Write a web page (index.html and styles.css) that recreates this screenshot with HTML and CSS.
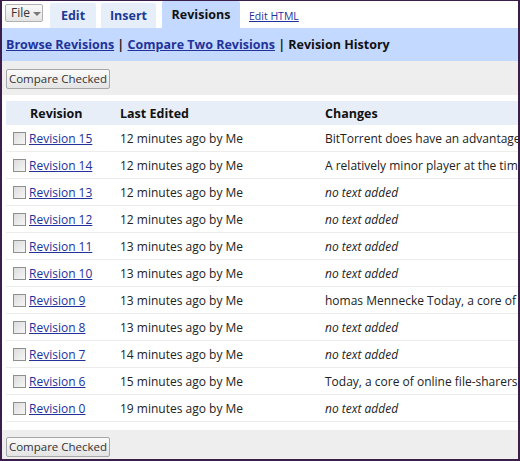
FILE: index.html
```html
<!DOCTYPE html>
<html>
<head>
<meta charset="utf-8">
<link rel="stylesheet" href="styles.css">
</head>
<body>
<div class="frame">
  <div class="topbar">
    <button class="file-btn">File <span class="caret"></span></button>
    <div class="tab tab-edit">Edit</div>
    <div class="tab tab-insert">Insert</div>
    <div class="tab tab-rev active">Revisions</div>
    <a class="edit-html" href="#">Edit HTML</a>
  </div>
  <div class="crumbs">
    <a href="#">Browse Revisions</a> | <a href="#">Compare Two Revisions</a> | <span class="current">Revision History</span>
  </div>
  <div class="toolbar">
    <button class="btn">Compare Checked</button>
  </div>
  <div class="table">
    <div class="row head">
      <div class="c1">Revision</div>
      <div class="c2">Last Edited</div>
      <div class="c3">Changes</div>
    </div>
    <div class="row"><div class="c1"><span class="cb"></span><a href="#">Revision 15</a></div><div class="c2">12 minutes ago by Me</div><div class="c3">BitTorrent does have an advantage w</div></div>
    <div class="row"><div class="c1"><span class="cb"></span><a href="#">Revision 14</a></div><div class="c2">12 minutes ago by Me</div><div class="c3">A relatively minor player at the time</div></div>
    <div class="row"><div class="c1"><span class="cb"></span><a href="#">Revision 13</a></div><div class="c2">12 minutes ago by Me</div><div class="c3"><em>no text added</em></div></div>
    <div class="row"><div class="c1"><span class="cb"></span><a href="#">Revision 12</a></div><div class="c2">12 minutes ago by Me</div><div class="c3"><em>no text added</em></div></div>
    <div class="row"><div class="c1"><span class="cb"></span><a href="#">Revision 11</a></div><div class="c2">13 minutes ago by Me</div><div class="c3"><em>no text added</em></div></div>
    <div class="row"><div class="c1"><span class="cb"></span><a href="#">Revision 10</a></div><div class="c2">13 minutes ago by Me</div><div class="c3"><em>no text added</em></div></div>
    <div class="row"><div class="c1"><span class="cb"></span><a href="#">Revision 9</a></div><div class="c2">13 minutes ago by Me</div><div class="c3">homas Mennecke Today, a core of c</div></div>
    <div class="row"><div class="c1"><span class="cb"></span><a href="#">Revision 8</a></div><div class="c2">13 minutes ago by Me</div><div class="c3"><em>no text added</em></div></div>
    <div class="row"><div class="c1"><span class="cb"></span><a href="#">Revision 7</a></div><div class="c2">14 minutes ago by Me</div><div class="c3"><em>no text added</em></div></div>
    <div class="row"><div class="c1"><span class="cb"></span><a href="#">Revision 6</a></div><div class="c2">15 minutes ago by Me</div><div class="c3">Today, a core of online file-sharers is</div></div>
    <div class="row"><div class="c1"><span class="cb"></span><a href="#">Revision 0</a></div><div class="c2">19 minutes ago by Me</div><div class="c3"><em>no text added</em></div></div>
  </div>
  <div class="toolbar bottom">
    <button class="btn">Compare Checked</button>
  </div>
</div>
</body>
</html>
```

FILE: styles.css
```css
html, body {
  margin: 0;
  padding: 0;
}
body {
  font-family: "Open Sans", "Noto Sans", sans-serif;
  font-size: 12px;
  color: #222;
  background: #fff;
}
.frame {
  width: 520px;
  height: 461px;
  box-sizing: border-box;
  border-style: solid;
  border-color: #3a1d48;
  border-width: 1px 2px 2px 2px;
  overflow: hidden;
  display: flex;
  flex-direction: column;
  background: #fff;
}
.topbar {
  height: 27px;
  flex: none;
  display: flex;
  align-items: flex-end;
  background: #fff;
}
.file-btn {
  align-self: flex-start;
  margin: 3px 0 0 3px;
  height: 18px;
  width: 38px;
  box-sizing: border-box;
  padding: 0 0 0 5px;
  border: 1px solid #b0b0b0;
  border-radius: 2px;
  background: linear-gradient(#fafafa, #e4e4e4);
  font-family: "Open Sans", sans-serif;
  font-size: 12px;
  color: #333;
  display: flex;
  align-items: center;
  gap: 3px;
  line-height: 1;
}
.caret {
  width: 0;
  height: 0;
  border-left: 4px solid transparent;
  border-right: 4px solid transparent;
  border-top: 4px solid #777;
  margin-top: 1px;
}
.tab {
  height: 25px;
  box-sizing: border-box;
  background: #e6eefa;
  color: #1d3a94;
  font-weight: bold;
  font-size: 12.5px;
  display: flex;
  align-items: center;
  justify-content: center;
  border-radius: 2px 2px 0 0;
}
.tab-edit { width: 46px; margin-left: 7px; }
.tab-insert { width: 55px; margin-left: 5px; }
.tab-rev { width: 78px; margin-left: 6px; }
.tab.active {
  height: 27px;
  background: #c3d9ff;
  color: #111;
}
.edit-html {
  align-self: center;
  margin: 3px 0 0 9px;
  font-size: 10.5px;
  color: #20309e;
}
.crumbs {
  height: 33px;
  flex: none;
  box-sizing: border-box;
  background: #c3d9ff;
  padding: 0 4px;
  line-height: 33px;
  font-weight: bold;
  font-size: 12.5px;
  color: #222;
  white-space: nowrap;
}
.crumbs a { color: #22329a; }
.crumbs .current { color: #111; }
.toolbar {
  height: 34px;
  flex: none;
  background: #eeeeee;
  display: flex;
  align-items: center;
  padding-left: 4px;
  padding-top: 1px;
  box-sizing: border-box;
}
.btn {
  height: 20px;
  width: 104px;
  box-sizing: border-box;
  border: 1px solid #a7a7a7;
  border-radius: 2px;
  background: linear-gradient(#fbfbfb, #e3e3e3);
  font-family: "Open Sans", sans-serif;
  font-size: 11.5px;
  color: #333;
  padding: 0;
  line-height: 1;
  white-space: nowrap;
}
.table {
  margin: 6px 0 8px 4px;
  flex: none;
}
.row {
  display: grid;
  grid-template-columns: 108px 205px 600px;
  height: 27px;
  box-sizing: border-box;
  border-bottom: 1px solid #ececec;
  align-items: center;
  white-space: nowrap;
}
.row.head {
  height: 24px;
  background: #e8eef7;
  font-weight: bold;
  font-size: 12.5px;
  color: #111;
  border-bottom: none;
}
.row.head .c1 { padding-left: 24px; }
.c1 {
  padding-left: 7px;
  display: flex;
  align-items: center;
}
.c2, .c3 { padding-left: 6px; }
.row a { color: #22329a; }
.cb {
  width: 11px;
  height: 11px;
  border: 1px solid #8e8f8f;
  background: linear-gradient(135deg, #dcdcdc, #f6f6f6);
  margin-right: 3px;
  flex: none;
}
em { font-style: italic; }
.toolbar.bottom {
  flex: 1;
  padding-top: 4px;
}
```
